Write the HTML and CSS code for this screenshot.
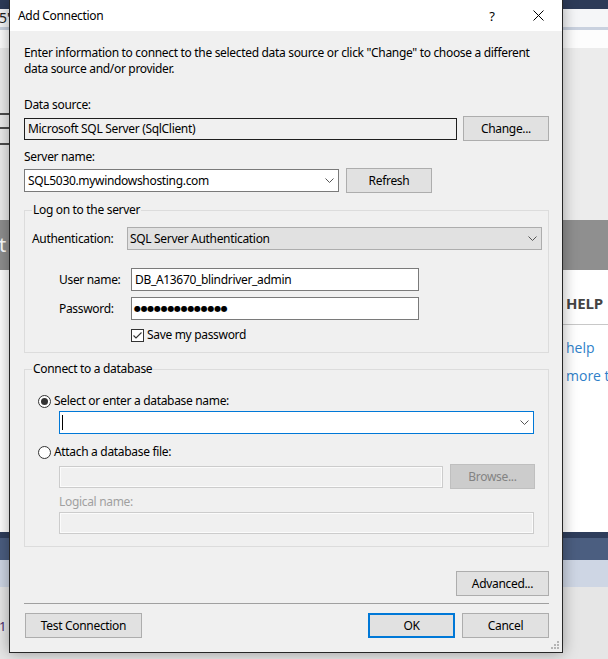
FILE: index.html
```html
<!DOCTYPE html>
<html>
<head>
<meta charset="utf-8">
<link rel="stylesheet" href="styles.css">
</head>
<body>
<div class="desk">
  <div class="band b-nav"></div>
  <div class="band b-tab"><span class="frag5">5'</span></div>
  <div class="band b-line"></div>
  <div class="band b-white"></div>
  <div class="band b-gray">
    <div class="ticks"><i></i><i></i><i></i></div>
  </div>
  <div class="band b-dark"><span class="frag-t">t</span></div>
  <div class="band b-page">
    <div class="help">
      <div class="help-head">GET HELP</div>
      <div class="help-rule"></div>
      <div class="help-link">help</div>
      <div class="help-link">more to</div>
    </div>
  </div>
  <div class="band b-navy2"></div>
  <div class="band b-blue"></div>
  <div class="band b-pale"></div>
  <div class="band b-foot"><span class="frag1">1</span></div>
</div>

<div class="dialog">
  <div class="titlebar">
    <span class="title">Add Connection</span>
    <span class="tb-help">?</span>
    <span class="tb-close"><svg width="11" height="11" viewBox="0 0 11 11"><path d="M0.5 0.5 L10.5 10.5 M10.5 0.5 L0.5 10.5" stroke="#000" stroke-width="1" fill="none"/></svg></span>
  </div>
  <div class="body">
    <p class="intro">Enter information to connect to the selected data source or click "Change" to choose a different<br>data source and/or provider.</p>

    <div class="label l-ds">Data source:</div>
    <div class="row r-ds">
      <div class="field ro ds-field">Microsoft SQL Server (SqlClient)</div>
      <button class="btn w86">Change...</button>
    </div>

    <div class="label l-sv">Server name:</div>
    <div class="row r-sv">
      <div class="field combo sv-combo"><span class="ctext">SQL5030.mywindowshosting.com</span><span class="chev"><svg width="9" height="5" viewBox="0 0 9 5"><path d="M0.5 0.5 L4.5 4.5 L8.5 0.5" stroke="#555" fill="none"/></svg></span></div>
      <button class="btn w86">Refresh</button>
    </div>

    <fieldset class="group g1">
      <legend>Log on to the server</legend>
      <div class="row r-auth">
        <span class="auth-label">Authentication:</span>
        <div class="field combo auth-combo"><span class="ctext">SQL Server Authentication</span><span class="chev"><svg width="9" height="5" viewBox="0 0 9 5"><path d="M0.5 0.5 L4.5 4.5 L8.5 0.5" stroke="#555" fill="none"/></svg></span></div>
      </div>
      <div class="row r-user">
        <span class="cred-label">User name:</span>
        <div class="field txt cred">DB_A13670_blindriver_admin</div>
      </div>
      <div class="row r-pass">
        <span class="cred-label">Password:</span>
        <div class="field txt cred"><span class="dots">●●●●●●●●●●●●●●</span></div>
      </div>
      <div class="row r-save">
        <span class="check"><svg width="13" height="13" viewBox="0 0 13 13"><rect x="0.5" y="0.5" width="12" height="12" fill="#fff" stroke="#333"/><path d="M2.5 6.5 L5 9 L10.5 3.5" stroke="#333" stroke-width="1.1" fill="none"/></svg></span>
        <span class="save-label">Save my password</span>
      </div>
    </fieldset>

    <fieldset class="group g2">
      <legend>Connect to a database</legend>
      <div class="row r-radio1">
        <span class="radio on"></span>
        <span>Select or enter a database name:</span>
      </div>
      <div class="field combo db-combo focus"><span class="ctext"><i class="caret"></i></span><span class="chev"><svg width="9" height="5" viewBox="0 0 9 5"><path d="M0.5 0.5 L4.5 4.5 L8.5 0.5" stroke="#555" fill="none"/></svg></span></div>
      <div class="row r-radio2">
        <span class="radio"></span>
        <span>Attach a database file:</span>
      </div>
      <div class="row r-file">
        <div class="field dis file-field"></div>
        <button class="btn dis-btn">Browse...</button>
      </div>
      <div class="label dis-label">Logical name:</div>
      <div class="field dis logical-field"></div>
    </fieldset>

    <button class="btn adv">Advanced...</button>
    <div class="sep"></div>
    <div class="row r-bottom">
      <button class="btn test">Test Connection</button>
      <span class="spacer"></span>
      <button class="btn ok">OK</button>
      <button class="btn cancel">Cancel</button>
    </div>
  </div>
  <svg class="grip" width="8" height="8" viewBox="0 0 8 8"><g fill="#b5b5b5"><rect x="6" y="0" width="2" height="2"/><rect x="3" y="3" width="2" height="2"/><rect x="6" y="3" width="2" height="2"/><rect x="0" y="6" width="2" height="2"/><rect x="3" y="6" width="2" height="2"/><rect x="6" y="6" width="2" height="2"/></g></svg>
</div>
</body>
</html>
```

FILE: styles.css
```css
html, body {
  margin: 0;
  padding: 0;
}
body {
  width: 608px;
  height: 659px;
  overflow: hidden;
  position: relative;
  font-family: "Noto Sans", "Open Sans", sans-serif;
  background: #e6e6e6;
}

/* background desktop */
.desk {
  display: flex;
  flex-direction: column;
  width: 608px;
}
.band { width: 100%; flex: none; position: relative; overflow: hidden; }
.b-nav { height: 9px; background: #2d3b58; }
.b-tab { height: 18px; background: #f5f6f8; }
.b-line { height: 3px; background: #c9d1df; }
.b-white { height: 18px; background: #fdfdfd; }
.b-gray { height: 172px; background: #ececec; }
.b-dark { height: 50px; background: #8f8f8f; }
.b-page { height: 262px; background: #ffffff; }
.b-navy2 { height: 6px; background: #2e3d5b; }
.b-blue { height: 22px; background: #4b5e80; }
.b-pale { height: 27px; background: #ced6e4; }
.b-foot { height: 72px; background: #e6e6e6; }

.frag5 {
  display: block;
  margin: 1px 0 0 -1px;
  font-size: 14px;
  line-height: 16px;
  color: #222;
}
.ticks {
  display: flex;
  flex-direction: column;
  width: 10px;
  padding-top: 65px;
}
.ticks i { display: block; height: 2px; background: #4d4d4d; }
.ticks i + i { margin-top: 12px; }
.ticks i:nth-child(3) { margin-top: 14px; }
.frag-t {
  display: block;
  margin: 14px 0 0 -1px;
  font-size: 20px;
  line-height: 22px;
  color: #fff;
}
.frag1 {
  display: block;
  margin: 31px 0 0 -1px;
  font-size: 13px;
  line-height: 16px;
  color: #4b2a6b;
}
.help {
  padding: 22px 0 0 522px;
  font-family: "Open Sans", "Noto Sans", sans-serif;
}
.help-head {
  font-weight: bold;
  font-size: 15px;
  line-height: 22px;
  color: #444;
  white-space: nowrap;
  letter-spacing: -0.2px;
  margin-left: 13px;
}
.help-rule { height: 1px; background: #c8c8c8; margin: 10px 0 0 0; }
.help-link {
  font-size: 14px;
  line-height: 20px;
  color: #2f7fc9;
  padding-left: 44px;
  white-space: nowrap;
}
.help-rule + .help-link { margin-top: 13px; }
.help-link + .help-link { margin-top: 8px; }

/* dialog */
.dialog {
  position: absolute;
  left: 9px;
  top: 0;
  width: 554px;
  height: 653px;
  box-sizing: border-box;
  border: 1px solid #262626;
  border-top: none;
  background: #f0f0f0;
  box-shadow: 0 0 14px rgba(0, 0, 0, 0.35);
  display: flex;
  flex-direction: column;
  font-size: 12px;
  line-height: 16px;
  letter-spacing: -0.32px;
  color: #000;
}
.titlebar {
  height: 31px;
  background: #fff;
  display: flex;
  align-items: center;
  padding-left: 8px;
  flex: none;
}
.title { flex: 1; font-size: 12px; }
.tb-help {
  width: 46px;
  text-align: center;
  font-size: 13px;
}
.tb-close {
  width: 46px;
  margin-right: 1px;
  display: flex;
  justify-content: center;
  align-items: center;
}
.body {
  flex: 1;
  display: flex;
  flex-direction: column;
  padding: 14px 13px 0 14px;
}
.intro { margin: 0; white-space: nowrap; }
.label { height: 16px; }
.l-ds { margin-top: 20px; }
.l-sv { margin-top: 8px; }
.row { display: flex; align-items: center; }
.r-ds { margin-top: 3px; height: 25px; gap: 6px; }
.r-sv { margin-top: 3px; height: 25px; gap: 7px; }

.field {
  box-sizing: border-box;
  display: flex;
  align-items: center;
  white-space: nowrap;
  overflow: hidden;
}
.ro {
  background: #f0f0f0;
  border: 1px solid #1e1e1e;
  padding-left: 3px;
  height: 22px;
}
.ds-field { width: 433px; }
.combo { height: 23px; }
.combo .ctext { flex: 1; display: flex; align-items: center; }
.combo .chev { width: 17px; display: flex; justify-content: center; align-items: center; }
.sv-combo {
  width: 315px;
  background: #fff;
  border: 1px solid #7a7a7a;
  padding-left: 3px;
}
.btn {
  box-sizing: border-box;
  height: 25px;
  background: #e1e1e1;
  border: 1px solid #adadad;
  font-family: inherit;
  font-size: 12px;
  letter-spacing: -0.32px;
  color: #000;
  padding: 0;
  margin: 0;
  flex: none;
}
.w86 { width: 86px; }

.group {
  margin: 0;
  border: 1px solid #dcdcdc;
  min-width: 0;
  display: flex;
  flex-direction: column;
}
.group legend {
  padding: 0 1px;
  font-size: 12px;
  line-height: 16px;
}
.g1 { margin-top: 9px; padding: 0 6px 9px 7px; }
.r-auth { margin-top: 9px; }
.auth-label { width: 95px; }
.auth-combo {
  width: 415px;
  background: #e1e1e1;
  border: 1px solid #adadad;
  padding-left: 2px;
}
.r-user { margin-top: 18px; margin-left: 27px; }
.r-pass { margin-top: 6px; margin-left: 27px; }
.cred-label { width: 72px; }
.txt {
  background: #fff;
  border: 1px solid #7a7a7a;
  padding-left: 3px;
  height: 23px;
}
.cred { width: 288px; }
.dots {
  font-family: "DejaVu Sans", sans-serif;
  font-size: 8px;
  letter-spacing: -0.3px;
  line-height: 10px;
  margin-left: -1px;
}
.r-save { margin-top: 7px; margin-left: 99px; height: 16px; }
.check { width: 13px; height: 13px; display: flex; }
.save-label { margin-left: 3px; }

.g2 { margin-top: 8px; padding: 0 6px 12px 7px; }
.r-radio1 { margin-top: 16px; margin-left: 6px; height: 16px; }
.radio {
  box-sizing: border-box;
  width: 13px;
  height: 13px;
  border: 1px solid #333;
  border-radius: 50%;
  background: #fff;
  margin-right: 3px;
  display: flex;
  justify-content: center;
  align-items: center;
}
.radio.on::after {
  content: "";
  width: 7px;
  height: 7px;
  border-radius: 50%;
  background: #333;
}
.db-combo {
  margin-top: 2px;
  margin-left: 27px;
  width: 475px;
  background: #fff;
  border: 1px solid #0078d7;
  padding-left: 2px;
}
.caret { display: block; width: 1px; height: 15px; background: #000; }
.r-radio2 { margin-top: 10px; margin-left: 6px; height: 16px; }
.r-file { margin-top: 4px; margin-left: 27px; height: 25px; gap: 7px; }
.dis {
  height: 22px;
  background: #f0f0f0;
  border: 1px solid #cccccc;
  box-shadow: inset 0 0 0 1px #fbfbfb;
}
.file-field { width: 384px; }
.dis-btn {
  width: 85px;
  background: #cccccc;
  border-color: #bfbfbf;
  color: #838383;
}
.dis-label { margin-top: 5px; margin-left: 27px; color: #a0a0a0; }
.logical-field { margin-top: 2px; margin-left: 27px; width: 475px; }

.adv { margin-top: 24px; align-self: flex-end; width: 93px; }
.sep { margin-top: 7px; height: 1px; background: #a0a0a0; }
.r-bottom { margin-top: 9px; height: 25px; }
.test { margin-left: 1px; width: 117px; }
.spacer { flex: 1; }
.ok { width: 87px; border: 2px solid #0078d7; }
.cancel { width: 87px; margin-left: 7px; }

.grip { position: absolute; right: 3px; bottom: 3px; }
```
